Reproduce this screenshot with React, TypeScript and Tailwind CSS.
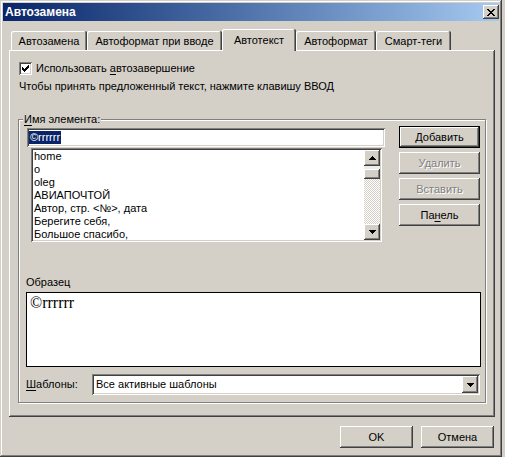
import React from "react";

const windowFrame =
  "shadow-[inset_-1px_-1px_0_#404040,inset_1px_1px_0_#d4d0c8,inset_-2px_-2px_0_#808080,inset_2px_2px_0_#ffffff]";
const raised =
  "shadow-[inset_-1px_-1px_0_#404040,inset_1px_1px_0_#ffffff,inset_-2px_-2px_0_#808080,inset_2px_2px_0_#d4d0c8]";
const sunken =
  "shadow-[inset_1px_1px_0_#808080,inset_-1px_-1px_0_#ffffff,inset_2px_2px_0_#404040,inset_-2px_-2px_0_#d4d0c8]";
const panelShadow =
  "shadow-[inset_-1px_-1px_0_#404040,inset_1px_1px_0_#ffffff,inset_-2px_-2px_0_#808080]";
const tabShadow =
  "shadow-[inset_-1px_0_0_#404040,inset_1px_1px_0_#ffffff,inset_-2px_0_0_#808080]";

function ArrowUp() {
  return (
    <svg width="7" height="4" viewBox="0 0 7 4" shapeRendering="crispEdges">
      <rect x="3" y="0" width="1" height="1" fill="#000" />
      <rect x="2" y="1" width="3" height="1" fill="#000" />
      <rect x="1" y="2" width="5" height="1" fill="#000" />
      <rect x="0" y="3" width="7" height="1" fill="#000" />
    </svg>
  );
}

function ArrowDown() {
  return (
    <svg width="7" height="4" viewBox="0 0 7 4" shapeRendering="crispEdges">
      <rect x="0" y="0" width="7" height="1" fill="#000" />
      <rect x="1" y="1" width="5" height="1" fill="#000" />
      <rect x="2" y="2" width="3" height="1" fill="#000" />
      <rect x="3" y="3" width="1" height="1" fill="#000" />
    </svg>
  );
}

function Tab({ label, w, selected }: { label: string; w: string; selected?: boolean }) {
  if (selected) {
    return (
      <div
        className={`relative z-10 h-[22px] mb-[-1px] bg-[#d4d0c8] rounded-tl-[2px] rounded-tr-[2px] ${tabShadow} flex justify-center pt-[5px] ${w}`}
      >
        {label}
      </div>
    );
  }
  return (
    <div
      className={`h-[19px] bg-[#d4d0c8] rounded-tl-[2px] rounded-tr-[2px] ${tabShadow} flex justify-center pt-[4px] ${w}`}
    >
      {label}
    </div>
  );
}

export default function App() {
  const items = [
    "home",
    "o",
    "oleg",
    "АВИАПОЧТОЙ",
    "Автор, стр. <№>, дата",
    "Берегите себя,",
    "Большое спасибо,",
  ];
  return (
    <div className="w-[505px] h-[457px] bg-[#d4d0c8] font-['Liberation_Sans',Arial,sans-serif] text-[11px] leading-[13px] text-black overflow-hidden select-none">
      <div className={`w-[502px] h-[457px] p-[3px] bg-[#d4d0c8] ${windowFrame} flex flex-col`}>
        {/* title bar */}
        <div className="h-[18px] bg-linear-to-r from-[#0a246a] to-[#a6caf0] flex items-center justify-between pl-[2px]">
          <span className="text-white font-bold text-[12px] leading-[14px]">Автозамена</span>
          <div className={`w-[16px] h-[14px] bg-[#d4d0c8] ${raised} flex items-center justify-center`}>
            <svg width="8" height="7" viewBox="0 0 8 7" shapeRendering="crispEdges">
              <path d="M0 0h2v1h-2zM6 0h2v1h-2zM1 1h2v1h-2zM5 1h2v1h-2zM2 2h4v1h-4zM3 3h2v1h-2zM2 4h4v1h-4zM1 5h2v1h-2zM5 5h2v1h-2zM0 6h2v1h-2zM6 6h2v1h-2z" fill="#000" />
            </svg>
          </div>
        </div>

        <div className="flex flex-col pl-[6px] pt-[8px]">
          {/* tabs */}
          <div className="flex items-end h-[21px] pl-[2px]">
            <Tab label="Автозамена" w="w-[76px]" />
            <Tab label="Автоформат при вводе" w="w-[135px]" />
            <Tab label="Автотекст" w="w-[74px]" selected />
            <Tab label="Автоформат" w="w-[80px]" />
            <Tab label="Смарт-теги" w="w-[75px]" />
          </div>

          {/* panel */}
          <div className={`w-[486px] h-[367px] ${panelShadow} pt-[12px] pl-[9px] flex flex-col`}>
            <div className="flex items-center ml-[1px] h-[13px]">
              <div className={`w-[13px] h-[13px] bg-white ${sunken} flex items-center justify-center`}>
                <svg width="7" height="7" viewBox="0 0 7 7" shapeRendering="crispEdges">
                  <path d="M6 0h1v3h-1zM5 1h1v3h-1zM4 2h1v3h-1zM3 3h1v3h-1zM2 4h1v3h-1zM1 3h1v3h-1zM0 2h1v3h-1z" fill="#000" />
                </svg>
              </div>
              <span className="ml-[4px]">
                Использовать <span className="underline underline-offset-[2px]">а</span>втозавершение
              </span>
            </div>
            <div className="mt-[5px] ml-[1px] h-[13px]">
              Чтобы принять предложенный текст, нажмите клавишу ВВОД
            </div>

            {/* group box */}
            <div className="relative mt-[26px] w-[468px] h-[284px] border border-[#808080] shadow-[inset_1px_1px_0_#ffffff,1px_1px_0_#ffffff] pt-[6px] pl-[7px] flex flex-col">
              <span className="absolute left-[4px] top-[-7px] bg-[#d4d0c8] px-[1px]">
                <span className="underline underline-offset-[2px]">И</span>мя элемента:
              </span>

              <div className="flex items-start">
                <div className="mt-[2px] ml-[1px] w-[358px] flex flex-col">
                  <div className={`h-[19px] w-[358px] bg-white ${sunken} flex items-center pl-[2px]`}>
                    <span className="bg-[#0a246a] text-white px-[1px]">©rrrrrr</span>
                  </div>
                  <div className={`mt-[1px] ml-[4px] w-[351px] h-[94px] bg-white ${sunken} p-[2px] flex`}>
                    <div className="flex-1 pl-[1px] overflow-hidden flex flex-col">
                      {items.map((it) => (
                        <div key={it} className="h-[13px] whitespace-nowrap">
                          {it}
                        </div>
                      ))}
                    </div>
                    <div className="w-[16px] flex flex-col">
                      <div className={`h-[16px] bg-[#d4d0c8] ${raised} flex items-center justify-center`}>
                        <ArrowUp />
                      </div>
                      <div className="h-[3px] bg-[#eeede9]" />
                      <div className={`h-[10px] bg-[#d4d0c8] ${raised}`} />
                      <div className="flex-1 [background-image:repeating-conic-gradient(#d4d0c8_0%_25%,#ffffff_0%_50%)] [background-size:2px_2px]" />
                      <div className={`h-[16px] bg-[#d4d0c8] ${raised} flex items-center justify-center`}>
                        <ArrowDown />
                      </div>
                    </div>
                  </div>
                </div>

                <div className="ml-[14px] w-[81px] flex flex-col gap-[4px]">
                  <div className={`h-[22px] border border-black bg-[#d4d0c8] ${raised} flex items-center justify-center`}>
                    <span>
                      <span className="underline underline-offset-[2px]">Д</span>обавить
                    </span>
                  </div>
                  <div className={`h-[22px] bg-[#d4d0c8] ${raised} flex items-center justify-center text-[#808080] [text-shadow:1px_1px_0_#ffffff]`}>
                    Удалить
                  </div>
                  <div className={`h-[22px] bg-[#d4d0c8] ${raised} flex items-center justify-center text-[#808080] [text-shadow:1px_1px_0_#ffffff]`}>
                    Вставить
                  </div>
                  <div className={`h-[22px] bg-[#d4d0c8] ${raised} flex items-center justify-center`}>
                    <span>
                      Па<span className="underline underline-offset-[2px]">н</span>ель
                    </span>
                  </div>
                </div>
              </div>

              <div className="mt-[34px] h-[13px]">Образец</div>
              <div className="mt-[3px] w-[455px] h-[75px] border border-black bg-white pt-[1px] pl-[3px] font-['Liberation_Serif','Times_New_Roman',serif] text-[16px] leading-[18px]">
                ©rrrrrr
              </div>

              <div className="mt-[7px] flex items-center">
                <div className="w-[66px]">
                  <span className="underline underline-offset-[2px]">Ш</span>аблоны:
                </div>
                <div className={`w-[388px] h-[21px] bg-white ${sunken} p-[2px] flex items-center`}>
                  <div className="flex-1 pl-[2px]">Все активные шаблоны</div>
                  <div className={`w-[16px] h-[17px] bg-[#d4d0c8] ${raised} flex items-center justify-center`}>
                    <ArrowDown />
                  </div>
                </div>
              </div>
            </div>
          </div>

          {/* bottom buttons */}
          <div className="w-[486px] flex justify-end gap-[8px] mt-[9px] pr-[1px]">
            <div className={`w-[73px] h-[22px] bg-[#d4d0c8] ${raised} flex items-center justify-center`}>OK</div>
            <div className={`w-[73px] h-[22px] bg-[#d4d0c8] ${raised} flex items-center justify-center`}>Отмена</div>
          </div>
        </div>
      </div>
    </div>
  );
}
